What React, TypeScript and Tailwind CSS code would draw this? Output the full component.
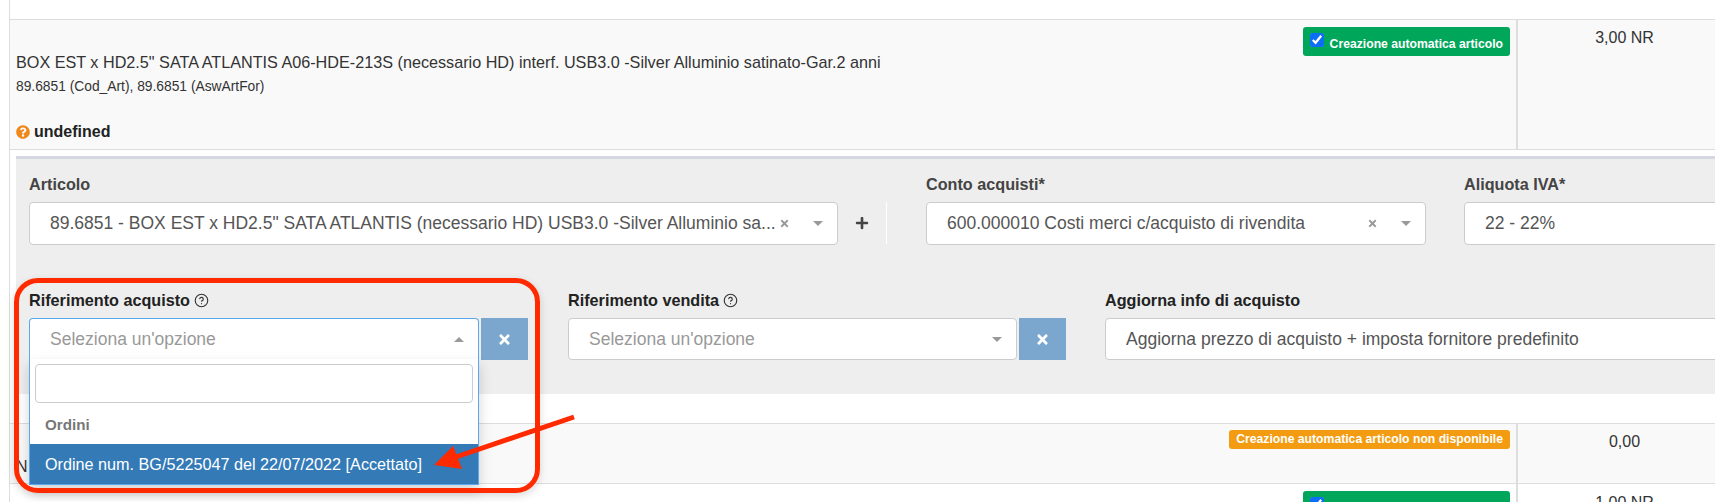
import { CircleHelp } from 'lucide-react';
import { FaPlus, FaQuestionCircle, FaTimes } from 'react-icons/fa';

function Arrow({ up = false }: { up?: boolean }) {
  return (
    <span
      className={`h-0 w-0 border-x-[5px] border-x-transparent ${
        up ? 'border-b-[5px] border-b-[#999]' : 'border-t-[5px] border-t-[#999]'
      }`}
    />
  );
}

function Label({ text, help = false, dark = false }: { text: string; help?: boolean; dark?: boolean }) {
  return (
    <div className={`flex h-5 items-center gap-[4px] text-[16.2px] font-bold ${dark ? 'text-[#222]' : 'text-[#444]'}`}>
      {text}
      {help && <CircleHelp className="h-[15px] w-[15px] text-[#333]" strokeWidth={1.8} />}
    </div>
  );
}

function SelectBox({
  value,
  placeholder = false,
  clear = false,
  showArrow = true,
  open = false,
  className,
}: {
  value: string;
  placeholder?: boolean;
  clear?: boolean;
  showArrow?: boolean;
  open?: boolean;
  className: string;
}) {
  return (
    <div
      className={`flex items-center bg-white pl-[20px] text-[17.5px] ${
        open
          ? 'rounded-t-[4px] border-x border-t border-[#5aa9ee]'
          : 'rounded-[4px] border border-[#ccc]'
      } ${placeholder ? 'text-[#999]' : 'text-[#555]'} ${className}`}
    >
      <span className="min-w-0 flex-1 truncate">{value}</span>
      {clear && <FaTimes className="mr-[8px] h-[11px] w-[11px] shrink-0 text-[#999]" />}
      {showArrow && (
        <span className="flex w-[39px] shrink-0 justify-center">
          <Arrow up={open} />
        </span>
      )}
    </div>
  );
}

function ClearButton() {
  return (
    <button className="ml-[2px] flex h-[42px] w-[47px] shrink-0 items-center justify-center bg-[#7ba7cf] text-white">
      <FaTimes className="h-[15px] w-[15px]" />
    </button>
  );
}

function Badge({ text, checked = false, className }: { text: string; checked?: boolean; className: string }) {
  return (
    <div
      className={`absolute right-[6px] flex items-center justify-end whitespace-nowrap rounded-[3px] pl-[8px] pr-[7px] text-[12.2px] font-bold text-white ${className}`}
    >
      {checked && <input type="checkbox" defaultChecked className="mr-[6px] -mt-[3px] h-[14px] w-[14px] shrink-0 accent-[#0b6ef5]" />}
      <span className={checked ? 'mt-[6px]' : ''}>{text}</span>
    </div>
  );
}

export default function App() {
  return (
    <div className="relative h-[502px] w-[1715px] overflow-hidden bg-white font-['Liberation_Sans',Arial,sans-serif] text-[16px] text-[#333]">
      <div className="ml-[9px] w-[1722px] border-l border-[#ddd] pt-[19px]">
        <div className="flex h-[131px] border-y border-[#ddd] bg-[#f9f9f9]">
          <div className="relative w-[1508px] border-r-2 border-[#ddd] pl-[6px] pt-[32px]">
            <Badge
              checked
              text="Creazione automatica articolo"
              className="top-[7px] h-[29px] w-[207px] bg-[#00a65a]"
            />
            <div className="text-[16.2px] leading-5">
              BOX EST x HD2.5" SATA ATLANTIS A06-HDE-213S (necessario HD) interf. USB3.0 -Silver Alluminio satinato-Gar.2 anni
            </div>
            <div className="mt-[7px] text-[13.8px] leading-[16px]">89.6851 (Cod_Art), 89.6851 (AswArtFor)</div>
            <div className="mt-[27px] flex items-center gap-[4px] font-bold leading-5 text-[#222]">
              <FaQuestionCircle className="h-[14px] w-[14px] text-[#f0871a]" />
              undefined
            </div>
          </div>
          <div className="flex-1 pt-[8px] text-center leading-5">3,00 NR</div>
        </div>

        <div className="ml-[6px] mt-[6px] h-[238px] border-t-[3px] border-[#d5d8e2] bg-[#eee] pl-[13px] pt-[15px]">
          <div className="flex">
            <div className="w-[809px] shrink-0">
              <Label text="Articolo" />
              <SelectBox
                clear
                value={'89.6851 - BOX EST x HD2.5" SATA ATLANTIS (necessario HD) USB3.0 -Silver Alluminio sa...'}
                className="mt-[8px] h-[43px]"
              />
            </div>
            <div className="mt-[28px] flex h-[42px] w-[49px] shrink-0 items-center justify-center border-r border-white text-[#444]">
              <FaPlus className="h-[14px] w-[14px]" />
            </div>
            <div className="ml-[39px] w-[500px] shrink-0">
              <Label text="Conto acquisti*" />
              <SelectBox
                clear
                value="600.000010 Costi merci c/acquisto di rivendita"
                className="mt-[8px] h-[43px]"
              />
            </div>
            <div className="ml-[38px] w-[400px] shrink-0">
              <Label text="Aliquota IVA*" />
              <SelectBox value="22 - 22%" showArrow={false} className="mt-[8px] h-[43px]" />
            </div>
          </div>

          <div className="mt-[45px] flex">
            <div className="w-[499px] shrink-0">
              <Label dark help text="Riferimento acquisto" />
              <div className="mt-[8px] flex">
                <SelectBox open placeholder value="Seleziona un'opzione" className="h-[42px] w-[450px]" />
                <ClearButton />
              </div>
            </div>
            <div className="ml-[40px] w-[498px] shrink-0">
              <Label dark help text="Riferimento vendita" />
              <div className="mt-[8px] flex">
                <SelectBox placeholder value="Seleziona un'opzione" className="h-[42px] w-[450px]" />
                <ClearButton />
              </div>
            </div>
            <div className="ml-[39px] w-[700px] shrink-0">
              <Label dark text="Aggiorna info di acquisto" />
              <SelectBox
                value="Aggiorna prezzo di acquisto + imposta fornitore predefinito"
                showArrow={false}
                className="mt-[8px] h-[42px]"
              />
            </div>
          </div>
        </div>

        <div className="mt-[29px] flex h-[61px] border-y border-[#ddd] bg-[#f9f9f9]">
          <div className="relative w-[1508px] border-r-2 border-[#ddd] pl-[6px] pt-[33px]">
            <Badge
              text="Creazione automatica articolo non disponibile"
              className="top-[6px] h-[19px] w-[281px] bg-[#f39c12]"
            />
            <div className="leading-5">N</div>
          </div>
          <div className="flex-1 pt-[8px] text-center leading-5">0,00</div>
        </div>

        <div className="flex h-[40px]">
          <div className="relative w-[1508px] border-r-2 border-[#ddd]">
            <Badge
              checked
              text="Creazione automatica articolo"
              className="top-[7px] h-[29px] w-[207px] bg-[#00a65a]"
            />
          </div>
          <div className="flex-1 pt-[9px] text-center leading-5">1,00 NR</div>
        </div>
      </div>

      {/* open dropdown of Riferimento acquisto */}
      <div className="absolute left-[29px] top-[359px] h-[126px] w-[450px] border-x border-b border-[#5aa9ee] bg-white shadow-[0_6px_12px_rgba(0,0,0,0.175)]">
        <div className="mx-[5px] mt-[5px] h-[39px] rounded-[4px] border border-[#ccc] bg-white" />
        <div className="h-[41px] pl-[15px] pt-[12px] text-[15.2px] font-bold leading-5 text-[#777]">Ordini</div>
        <div className="flex h-[40px] items-center bg-[#337ab7] pl-[15px] text-[16.2px] text-white">
          Ordine num. BG/5225047 del 22/07/2022 [Accettato]
        </div>
      </div>

      {/* annotation drawn over the screenshot */}
      <div className="absolute left-[14px] top-[278px] h-[215px] w-[526px] rounded-[24px] border-[5px] border-[#ff2a00] shadow-[0_3px_8px_rgba(0,0,0,0.15)]" />
      <svg className="absolute left-[425px] top-[405px]" width="160" height="75" viewBox="425 405 160 75">
        <line x1="574" y1="417" x2="450" y2="459" stroke="#ff2a00" strokeWidth="5" />
        <polygon points="434,465 453,446 462,469" fill="#ff2a00" />
      </svg>
    </div>
  );
}
